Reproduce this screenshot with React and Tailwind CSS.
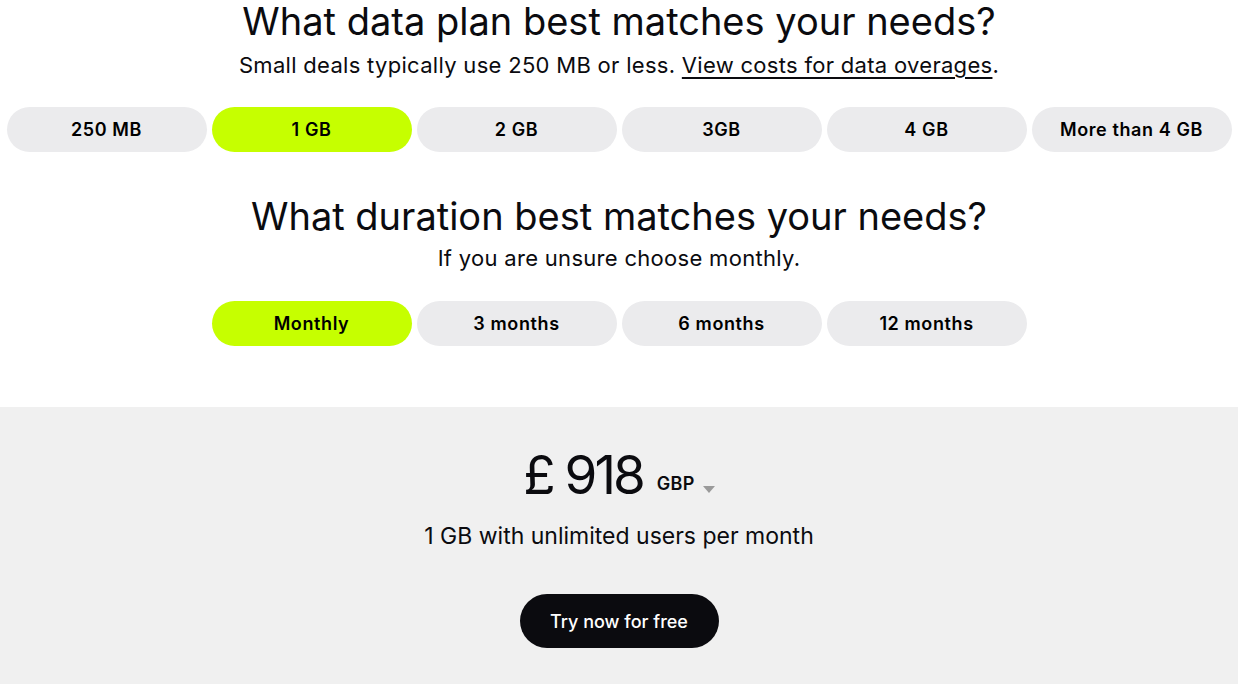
import React, { useState } from "react";

const font = { fontFamily: "Inter, 'Noto Sans', sans-serif" };

const dataPlans = ["250 MB", "1 GB", "2 GB", "3GB", "4 GB", "More than 4 GB"];
const durations = ["Monthly", "3 months", "6 months", "12 months"];

const Pill = ({ label, active, onClick }) => (
    <button
        onClick={onClick}
        className={`w-[200px] h-[45px] rounded-full text-[18px] font-semibold tracking-[0.6px] text-black ${active ? "bg-[#c6ff00]" : "bg-[#ebebed]"}`}
    >
        {label}
    </button>
);

const App = () => {
    const [plan, setPlan] = useState("1 GB");
    const [duration, setDuration] = useState("Monthly");

    return (
        <div className="min-h-screen bg-white text-[#0b0b0f]" style={font}>
            <section className="flex flex-col items-center pb-[61px]">
                <h2 className="text-[38px] leading-[42px]">What data plan best matches your needs?</h2>
                <p className="text-[22px] leading-[28px] tracking-[0.3px] mt-[9px]">
                    Small deals typically use 250 MB or less. <a href="#" className="underline underline-offset-[4px]">View costs for data overages</a>.
                </p>
                <div className="flex gap-[5px] mt-[28px]">
                    {dataPlans.map((p) => (
                        <Pill key={p} label={p} active={plan === p} onClick={() => setPlan(p)} />
                    ))}
                </div>

                <h2 className="text-[38px] leading-[42px] mt-[43px]">What duration best matches your needs?</h2>
                <p className="text-[22px] leading-[28px] tracking-[0.3px] mt-[7px]">If you are unsure choose monthly.</p>
                <div className="flex gap-[5px] mt-[29px]">
                    {durations.map((d) => (
                        <Pill key={d} label={d} active={duration === d} onClick={() => setDuration(d)} />
                    ))}
                </div>
            </section>

            <section className="bg-[#f0f0f0] flex flex-col items-center pt-[38px] pb-[36px]">
                <div className="flex items-end">
                    <span className="text-[53px] leading-[60px] tracking-[-3px]">£ 918</span>
                    <span className="text-[18px] font-semibold tracking-[0.3px] ml-[14px] mb-[8px]">GBP</span>
                    <span className="ml-[8px] mb-[12px] w-0 h-0 border-l-[6px] border-r-[6px] border-t-[7px] border-l-transparent border-r-transparent border-t-[#9a9a9a]"></span>
                </div>
                <p className="text-[23px] leading-[30px] mt-[16px]">1 GB with unlimited users per month</p>
                <button className="mt-[43px] w-[199px] h-[54px] rounded-full bg-[#0b0b0f] text-white text-[18px] font-medium">Try now for free</button>
            </section>
        </div>
    );
};

export default App;
